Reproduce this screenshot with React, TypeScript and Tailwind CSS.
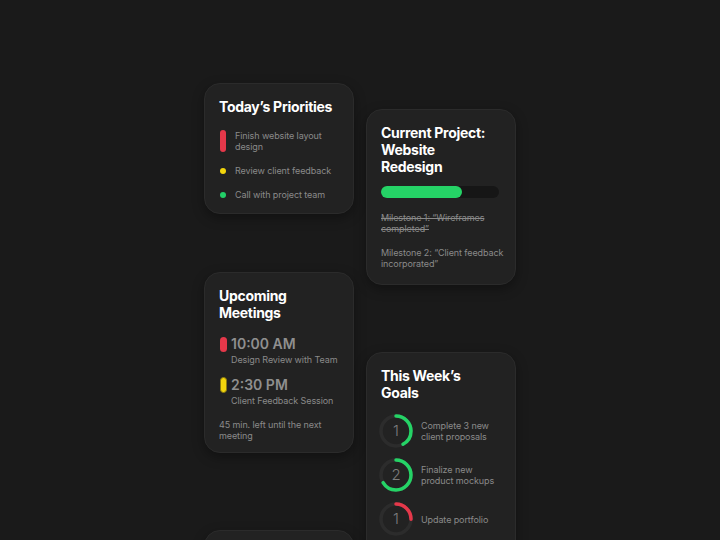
import React from "react";

function Card({ children, className = "" }: { children?: React.ReactNode; className?: string }) {
  return (
    <div
      className={
        "w-[150px] shrink-0 rounded-[16px] bg-[#222222] border border-[#2b2b2b] shadow-[0_4px_12px_rgba(0,0,0,0.35)] pl-[14px] pr-[8px] " +
        className
      }
    >
      {children}
    </div>
  );
}

function Ring({ n, pct, color }: { n: number; pct: number; color: string }) {
  const r = 15;
  const c = 2 * Math.PI * r;
  return (
    <div className="relative w-[34px] h-[34px] shrink-0">
      <svg width="34" height="34" viewBox="0 0 34 34">
        <circle cx="17" cy="17" r={r} fill="none" stroke="#2c2c2c" strokeWidth="3.5" />
        <circle
          cx="17"
          cy="17"
          r={r}
          fill="none"
          stroke={color}
          strokeWidth="3.5"
          strokeLinecap="round"
          strokeDasharray={`${c * pct} ${c}`}
          transform="rotate(-90 17 17)"
        />
      </svg>
      <div className="absolute inset-0 flex items-center justify-center text-[15px] text-[#7d7d7d] font-light">
        {n}
      </div>
    </div>
  );
}

const small = "text-[9px] leading-[11px] text-[#8a8a8a] tracking-[-0.1px]";
const title = "text-white text-[14px] font-bold leading-[17px] tracking-[-0.3px]";

export default function App() {
  return (
    <div
      className="w-[720px] h-[540px] overflow-hidden bg-[#1a1a1a] flex justify-center gap-[12px]"
      style={{ fontFamily: "Inter, 'Noto Sans', sans-serif" }}
    >
      <div className="flex flex-col">
        <Card className="mt-[83px] pt-[14px] h-[131px]">
          <div className={title}>Today’s Priorities</div>
          <div className={"mt-[15px] flex flex-col gap-[13px] pr-[8px] " + small}>
            <div className="flex items-stretch gap-[9px] pl-[1px]">
              <div className="w-[6px] rounded-full bg-[#e5384a] shrink-0" />
              <div>Finish website layout design</div>
            </div>
            <div className="flex items-center gap-[9px] pl-[1px]">
              <div className="w-[6px] h-[6px] rounded-full bg-[#f2d50c] shrink-0" />
              <div>Review client feedback</div>
            </div>
            <div className="flex items-center gap-[9px] pl-[1px]">
              <div className="w-[6px] h-[6px] rounded-full bg-[#22cf68] shrink-0" />
              <div>Call with project team</div>
            </div>
          </div>
        </Card>

        <Card className="mt-[58px] pt-[14px] h-[181px]">
          <div className={title}>
            Upcoming
            <br />
            Meetings
          </div>
          <div className="mt-[14px] flex items-start gap-[4px] pl-[1px]">
            <div className="mt-[2px] w-[7px] h-[15px] rounded-full bg-[#e5384a] shrink-0" />
            <div>
              <div className="text-[14px] leading-[18px] font-semibold text-[#8f8f8f]">10:00 AM</div>
              <div className={small + " mt-[1px] whitespace-nowrap"}>Design Review with Team</div>
            </div>
          </div>
          <div className="mt-[11px] flex items-start gap-[4px] pl-[1px]">
            <div className="mt-[1px] w-[7px] h-[16px] rounded-full bg-[#f2d50c] border border-[#8a7a10] shrink-0" />
            <div>
              <div className="text-[14px] leading-[18px] font-semibold text-[#8f8f8f]">2:30 PM</div>
              <div className={small + " mt-[1px] whitespace-nowrap"}>Client Feedback Session</div>
            </div>
          </div>
          <div className={"mt-[13px] pr-[8px] " + small}>45 min. left until the next meeting</div>
        </Card>

        <Card className="mt-[77px] h-[60px]" />
      </div>

      <div className="flex flex-col">
        <Card className="mt-[109px] pt-[14px] h-[176px]">
          <div className={title}>
            Current Project:
            <br />
            Website
            <br />
            Redesign
          </div>
          <div className="mt-[11px] w-[118px] h-[12px] rounded-full bg-[#161616]">
            <div className="h-full w-[81px] rounded-full bg-[#25d366]" />
          </div>
          <div className={"mt-[14px] line-through " + small}>
            Milestone 1: “Wireframes
            <br />
            completed”
          </div>
          <div className={"mt-[13px] " + small}>
            Milestone 2: “Client feedback
            <br />
            incorporated”
          </div>
        </Card>

        <Card className="mt-[67px] pt-[14px] h-[220px]">
          <div className={title}>
            This Week’s
            <br />
            Goals
          </div>
          <div className="mt-[13px] flex flex-col gap-[10px]">
            <div className="flex items-center gap-[8px] -ml-[2px]">
              <Ring n={1} pct={0.42} color="#25d366" />
              <div className={small}>
                Complete 3 new
                <br />
                client proposals
              </div>
            </div>
            <div className="flex items-center gap-[8px] -ml-[2px]">
              <Ring n={2} pct={0.66} color="#25d366" />
              <div className={small}>
                Finalize new
                <br />
                product mockups
              </div>
            </div>
            <div className="flex items-center gap-[8px] -ml-[2px]">
              <Ring n={1} pct={0.25} color="#e5384a" />
              <div className={small}>Update portfolio</div>
            </div>
          </div>
        </Card>
      </div>
    </div>
  );
}
